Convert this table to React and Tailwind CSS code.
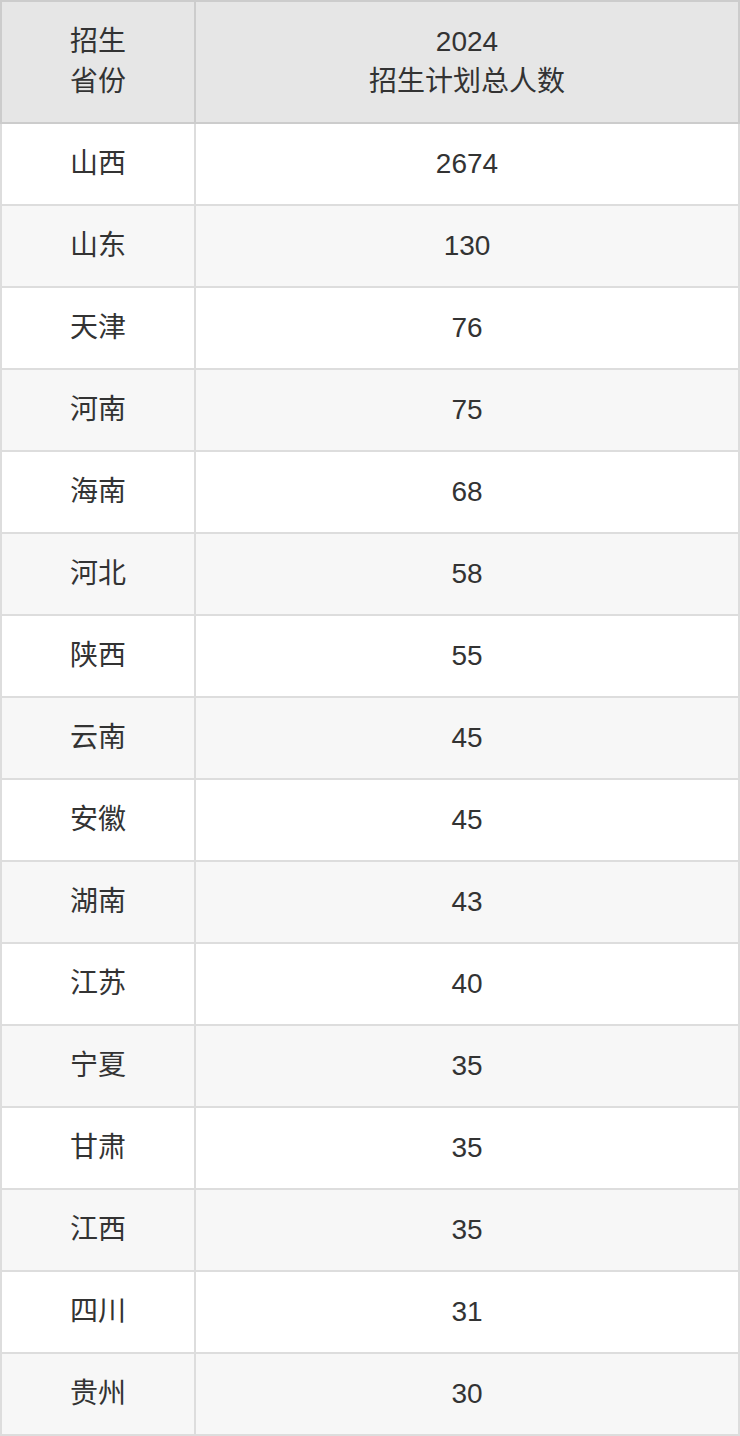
import React from "react";

const rows = [
  ["山西", "2674"],
  ["山东", "130"],
  ["天津", "76"],
  ["河南", "75"],
  ["海南", "68"],
  ["河北", "58"],
  ["陕西", "55"],
  ["云南", "45"],
  ["安徽", "45"],
  ["湖南", "43"],
  ["江苏", "40"],
  ["宁夏", "35"],
  ["甘肃", "35"],
  ["江西", "35"],
  ["四川", "31"],
  ["贵州", "30"],
];

export default function App() {
  return (
    <div
      className="w-[740px] bg-white text-[#333] text-[28px] leading-[40px]"
      style={{ fontFamily: '"Liberation Sans", "Noto Sans CJK SC", sans-serif' }}
    >
      <div className="flex bg-[#e6e6e6] border-t-2 border-l-2 border-[#cccccc]">
        <div className="w-[194px] h-[122px] flex items-center justify-center text-center border-r-2 border-b-2 border-[#cccccc]">
          <div>
            招生
            <br />
            省份
          </div>
        </div>
        <div className="flex-1 h-[122px] flex items-center justify-center text-center border-r-2 border-b-2 border-[#cccccc]">
          <div>
            2024
            <br />
            招生计划总人数
          </div>
        </div>
      </div>
      {rows.map(([prov, num], i) => (
        <div
          key={prov + i}
          className={`flex border-l-2 border-[#dddddd] ${i % 2 === 1 ? "bg-[#f7f7f7]" : "bg-white"}`}
        >
          <div className="w-[194px] h-[82px] flex items-center justify-center border-r-2 border-b-2 border-[#dddddd]">
            {prov}
          </div>
          <div className="flex-1 h-[82px] flex items-center justify-center border-r-2 border-b-2 border-[#dddddd]">
            {num}
          </div>
        </div>
      ))}
    </div>
  );
}
